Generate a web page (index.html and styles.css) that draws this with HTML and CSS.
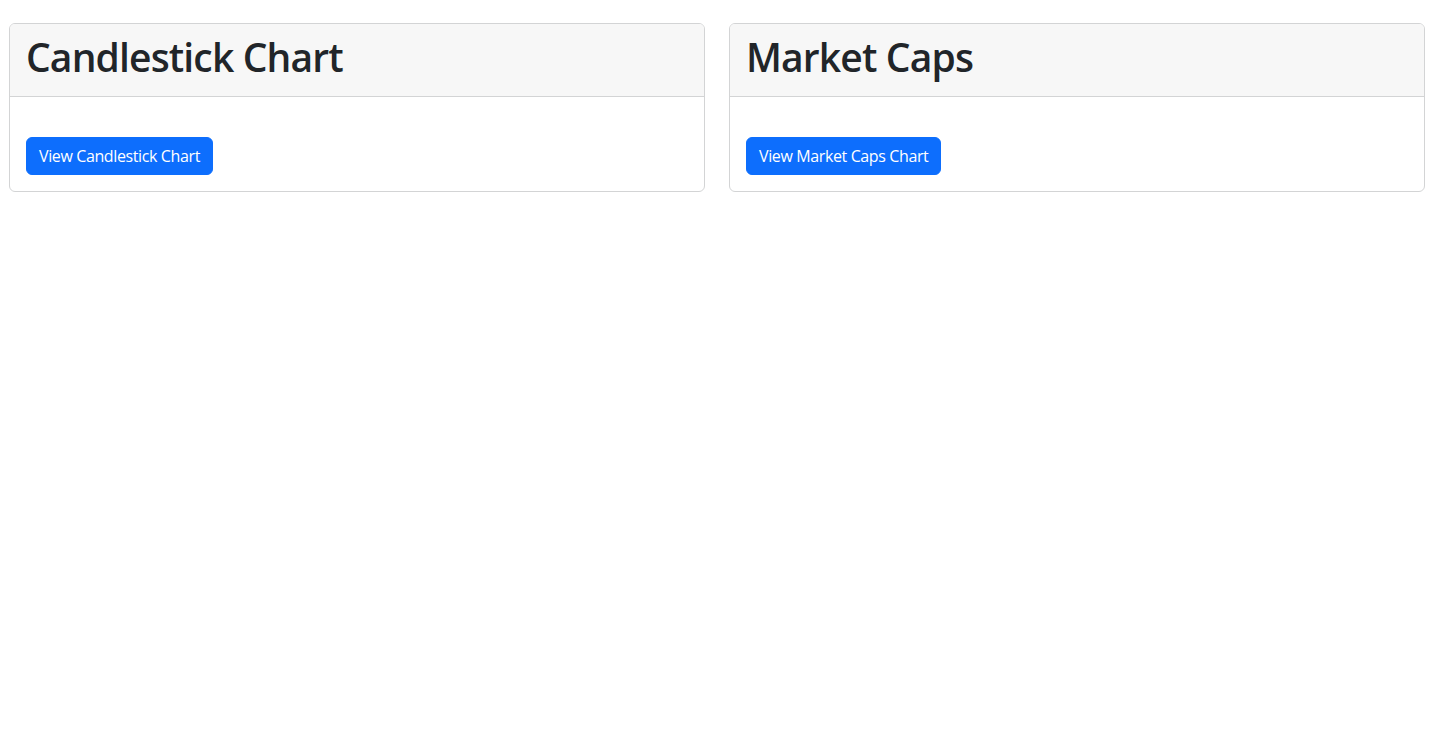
FILE: index.html
```html
<!DOCTYPE html>
<html lang="en">
<head>
<meta charset="utf-8">
<title>Charts</title>
<link rel="stylesheet" href="styles.css">
</head>
<body>
<main class="page">
  <section class="card">
    <div class="card-header"><h1 class="card-title">Candlestick Chart</h1></div>
    <div class="card-body">
      <a class="btn" href="#">View Candlestick Chart</a>
    </div>
  </section>
  <section class="card">
    <div class="card-header"><h1 class="card-title">Market Caps</h1></div>
    <div class="card-body">
      <a class="btn" href="#">View Market Caps Chart</a>
    </div>
  </section>
</main>
</body>
</html>
```
FILE: styles.css
```css
* { box-sizing: border-box; }
body {
  margin: 0;
  background: #fff;
  color: #212529;
  font-family: "Open Sans", "Noto Sans", sans-serif;
  font-size: 16px;
  line-height: 1.5;
}
.page {
  display: grid;
  grid-template-columns: 1fr 1fr;
  gap: 24px;
  padding: 23px 12px 0 9px;
  align-items: start;
}
.card {
  border: 1px solid #d3d4d5;
  border-radius: 6px;
  overflow: hidden;
  background: #fff;
}
.card-header {
  background: #f7f7f7;
  border-bottom: 1px solid #d3d4d5;
  padding: 8px 16px;
}
.card-title {
  margin: 0 0 8px;
  font-size: 39px;
  font-weight: 600;
  line-height: 48px;
  letter-spacing: -0.85px;
  color: #212529;
  position: relative;
  top: 1px;
}
.card-body {
  padding: 40px 16px 16px;
}
.btn {
  display: inline-block;
  background: #0d6efd;
  border: 1px solid #0d6efd;
  color: #fff;
  text-decoration: none;
  padding: 6px 12px;
  border-radius: 6px;
  font-size: 16px;
  line-height: 24px;
  letter-spacing: -0.38px;
}
```
